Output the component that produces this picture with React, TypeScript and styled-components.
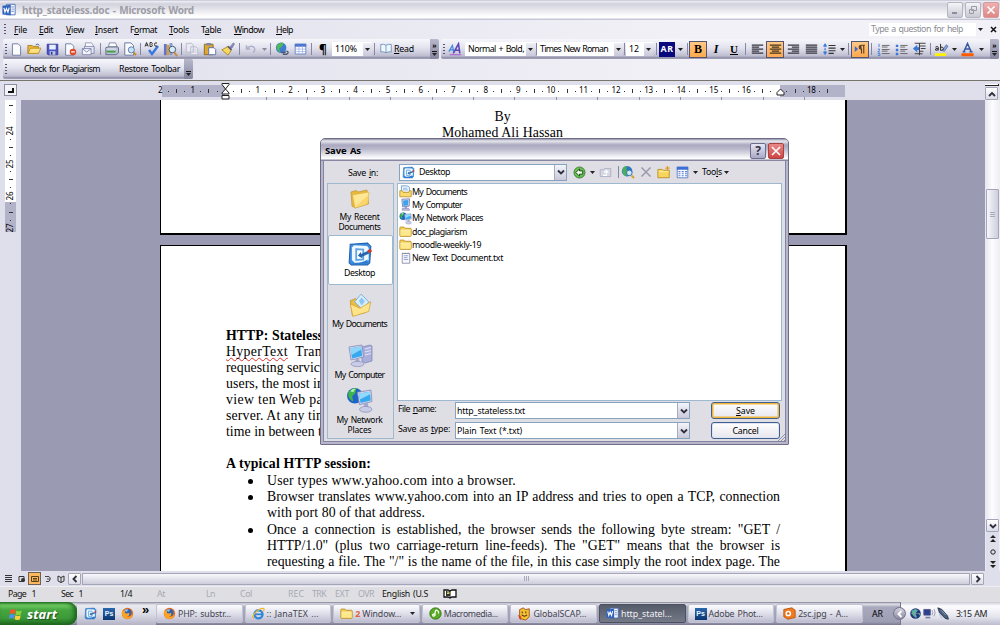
import React, { useLayoutEffect, useRef, useState } from 'react';
import styled, { createGlobalStyle, css } from 'styled-components';

const GlobalStyle = createGlobalStyle`
  * { box-sizing: border-box; }
  html, body { margin: 0; padding: 0; overflow: hidden; }
  body { font-family: 'Noto Sans', 'Open Sans', sans-serif; font-size: 9px; color: #000; }
  svg { display: block; flex: none; }
`;

/* ---------- text ---------- */

const TextBox = styled.span<{ $size?: number; $color?: string; $bold?: boolean; $serif?: boolean; $italic?: boolean }>`
  display: inline-block;
  white-space: pre;
  flex: none;
  font-size: ${p => p.$size ?? 8.8}px;
  color: ${p => p.$color ?? '#000'};
  font-weight: ${p => (p.$bold ? 700 : 400)};
  font-style: ${p => (p.$italic ? 'italic' : 'normal')};
  ${p => (p.$serif ? css`font-family: 'Liberation Serif', 'Times New Roman', serif;` : css`word-spacing: 1px;`)}
`;
const Mnemonic = styled.u`
  text-decoration: underline;
  text-decoration-thickness: 1px;
  text-underline-offset: 1px;
`;

type LabelProps = {
  t: string; w?: number; size?: number; color?: string; bold?: boolean; serif?: boolean; italic?: boolean;
};

/* Tracks the text so that it fills the given width; "&" marks the mnemonic. */
function Label({ t, w, size, color, bold, serif, italic }: LabelProps) {
  const ref = useRef<HTMLSpanElement>(null);
  const [tracking, setTracking] = useState(0);
  const at = t.indexOf('&');
  const count = t.length - (at >= 0 ? 1 : 0);
  useLayoutEffect(() => {
    if (ref.current && w) setTracking((w - ref.current.getBoundingClientRect().width) / count);
  }, [w, count]);
  return (
    <TextBox ref={ref} $size={size} $color={color} $bold={bold} $serif={serif} $italic={italic} style={{ letterSpacing: tracking }}>
      {at < 0 ? t : <>{t.slice(0, at)}<Mnemonic>{t[at + 1]}</Mnemonic>{t.slice(at + 2)}</>}
    </TextBox>
  );
}

/* ---------- icons ---------- */

const Svg = ({ s = 14, children, box = 16 }: { s?: number; children: React.ReactNode; box?: number }) => (
  <svg width={s} height={s} viewBox={`0 0 ${box} ${box}`} fill="none">{children}</svg>
);
const Page = ({ x = 3, y = 1, w = 10, h = 14 }) => (
  <path d={`M${x} ${y}h${w - 3}l3 3v${h - 3}h-${w}z`} fill="#fafcff" stroke="#5f6c92" />
);
const Folder = ({ s = 14 }) => (
  <Svg s={s}>
    <path d="M1 3.5q0-1 1-1h4l1.5 1.5H14q1 0 1 1V13q0 1-1 1H2q-1 0-1-1z" fill="#f3cd57" stroke="#b98d26" />
    <path d="M1.8 6.5h12.6v6.7H1.8z" fill="#fde88c" />
    <path d="M2 6.4h12" stroke="#fff6c8" />
  </Svg>
);
const FolderTall = ({ s = 24 }) => (
  <Svg s={s} box={24}>
    <path d="M3 6l5-1.500 2 1.500 9-2 1.500 14L7 22l-3-2z" fill="#e8b93c" stroke="#c0932c" strokeWidth=".7" />
    <path d="M4.500 9L21 6l-1.500 12L7 22z" fill="#fde795" stroke="#dcb13f" strokeWidth=".6" />
    <path d="M7 21L19.500 17.500 20.500 9z" fill="#f8cf58" opacity=".7" />
  </Svg>
);
const DesktopIcon = ({ s = 14 }) => (
  <Svg s={s} box={24}>
    <path d="M3 3l16-1 3 3-1 15-2 2H4l-2-2z" fill="#3d8ede" stroke="#1f63b4" />
    <path d="M4.500 6l2-2 12 .5 1.500 2v11L17 20H7l-2.500-2.500z" fill="#eef8fe" />
    <path d="M8.500 7.500l6.500.5v9l-6.500.5z" stroke="#5aa5e2" strokeWidth="1.600" fill="#fff" />
    <path d="M5 20q8 1 14-3v4H5z" fill="#2c7bd0" />
    <path d="M10 13.500L13 10v2l6.500-3 1 2.500-6.500 3v1.500z" fill="#2a66ae" />
    <path d="M19.500 10l3-1.500" stroke="#d33b27" strokeWidth="2.800" />
  </Svg>
);
const DocsIcon = ({ s = 24 }) => (
  <Svg s={s} box={24}>
    <path d="M3 8l5-2 2 2 7-1v12L5 22z" fill="#e9bd45" stroke="#bd922c" strokeWidth=".7" />
    <path d="M7 9l6-7 7 7-5 8z" fill="#d7edfb" stroke="#6ba9d8" strokeWidth=".8" />
    <path d="M11 8l2.500-3 3 3.500-3 4z" fill="#8ec6ee" />
    <path d="M3 11l9 4 10-6-2 9L5.500 22.500z" fill="#fde48a" stroke="#d1a437" strokeWidth=".7" />
  </Svg>
);
const DocsSmall = ({ s = 13 }) => (
  <Svg s={s}>
    <path d="M3 1h7l3 2v7H3z" fill="#eaf4fd" stroke="#6a97c8" />
    <path d="M5 4h5M5 6h6" stroke="#7fb1e0" />
    <path d="M1 7h3l1 2h7l1-2h2v7.500H1z" fill="#fbdc70" stroke="#b98d26" />
  </Svg>
);
const ComputerIcon = ({ s = 26 }) => (
  <Svg s={s} box={26}>
    <path d="M15 4l8-2 2 1v15l-7 2-3-2z" fill="#a9aedb" stroke="#7b80b4" strokeWidth=".7" />
    <path d="M18 6l6-1.500M18 9l6-1.500M18 12l6-1.500" stroke="#e6e8fa" />
    <path d="M2 4l13-2 1.500 12L4 17z" fill="#d5d9ee" stroke="#8388b5" strokeWidth=".8" />
    <path d="M3.500 5.200L14 3.500l1.200 9.500-10.200 2.400z" fill="#36a8ee" />
    <path d="M3.500 5.200L14 3.500l.4 3L4.500 12z" fill="#8cd5fb" />
    <path d="M8 16.500l4-.8.8 4H9z" fill="#a3a8d0" />
    <ellipse cx="10.500" cy="21" rx="6.500" ry="2.600" fill="#c9cce6" stroke="#8a8fb9" strokeWidth=".7" />
  </Svg>
);
const ComputerSmall = ({ s = 13 }) => (
  <Svg s={s}>
    <path d="M3.500 1.500L13 1l-.5 9-8 1z" fill="#d5d9ee" stroke="#7178ad" />
    <path d="M5 3l6.500-.5-.5 6.500-5.500.7z" fill="#37a4ec" />
    <path d="M7 11h3v2H7z" fill="#9aa0cb" />
    <path d="M4 13h8l1 2H4z" fill="#c9cce6" stroke="#7b81b2" strokeWidth=".8" />
  </Svg>
);
const NetworkIcon = ({ s = 26 }) => (
  <Svg s={s} box={26}>
    <circle cx="8.500" cy="8.500" r="7.500" fill="#1f62c9" />
    <path d="M2 6q3-5 8-5l-1 5-3 3 1 5q-5-2-5-8z" fill="#3fb548" />
    <path d="M4 4q3-3 5-2l-2 3z" fill="#b3efa6" />
    <path d="M11 5l13-2 1 11-12 3z" fill="#d5d9ee" stroke="#8388b5" strokeWidth=".8" />
    <path d="M12.400 6.200L23 4.500l.8 8.500-9.800 2.400z" fill="#36a8ee" />
    <path d="M12.400 6.200L23 4.500l.3 2.500L13.300 12z" fill="#93d9fb" />
    <path d="M17 16l4-.8.500 4.500h-4z" fill="#a3a8d0" />
    <ellipse cx="19" cy="21.500" rx="6" ry="2.800" fill="#c9cce6" stroke="#8a8fb9" strokeWidth=".7" />
  </Svg>
);
const Firefox = ({ s = 13 }) => (
  <Svg s={s}>
    <circle cx="8" cy="8" r="7" fill="#e56b14" />
    <circle cx="8.500" cy="7" r="4.400" fill="#2d63b2" />
    <path d="M1.500 4Q3 5 5 4.500 4 7 6 8q3 0 4-1 1 4-3 5 5 1 7-4 0 5-4 6.500Q4 15.500 2 11 0 7 1.500 4z" fill="#f9a427" />
    <path d="M4 4q2-2 5-1L7 6z" fill="#8fc3ef" />
  </Svg>
);
const IELogo = ({ s = 13 }) => (
  <Svg s={s}>
    <circle cx="8" cy="9" r="5" stroke="#2f86d6" strokeWidth="2.800" />
    <path d="M4 9h8.500" stroke="#2f86d6" strokeWidth="2.200" />
    <path d="M2 14Q-1 12 5 6q6-5.500 9.500-4 1 1-.5 3.500" stroke="#f2b829" strokeWidth="1.500" />
  </Svg>
);
const TileBox = styled.span<{ $bg: string; $s: number }>`
  width: ${p => p.$s}px;
  height: ${p => p.$s}px;
  background: ${p => p.$bg};
  display: flex;
  align-items: center;
  justify-content: center;
  flex: none;
  font: 700 7px 'Liberation Sans', sans-serif;
  color: #eaf5ff;
`;
const PsIcon = () => <TileBox $bg="linear-gradient(#2a67ad,#0c3572)" $s={12}>Ps</TileBox>;
const WordLogo = ({ s = 14 }) => (
  <Svg s={s}>
    <path d="M5 1.500h10v12H5z" fill="#f4f8ff" stroke="#4a6db8" />
    <path d="M10.500 4.500h3M11 7h2.500M10.500 9.500h3" stroke="#6a88c6" />
    <path d="M.5 3l9.500-1v12l-9.500-1z" fill="#2d62bd" />
    <path d="M2.200 5.500l1.200 5 1.700-4.300 1.700 4.300L8.200 5.200" stroke="#fff" strokeWidth="1.300" />
  </Svg>
);

const Tool: Record<string, React.ReactNode> = {
  new: <Svg s={13}><Page /></Svg>,
  open: <Svg><path d="M1 4h5l1 1h6v8H1z" fill="#eebb3c" stroke="#aa7c1c" /><path d="M1 13l3-6h12l-3 6z" fill="#fde081" stroke="#b68b25" /><path d="M10 3q3-2 4 1" stroke="#3c5fae" /></Svg>,
  save: <Svg s={13}><path d="M1.500 1.500h13v13h-12l-1-1z" fill="#4a55c4" stroke="#2a3390" /><path d="M4 2h8v6H4z" fill="#e9eefc" /><path d="M4.500 10h7v4.500h-7z" fill="#c5cbe6" /><path d="M6 11h2v3H6z" fill="#2a3390" /></Svg>,
  perm: <Svg s={13}><Page x={2} /><circle cx="11" cy="11" r="4" fill="#e2492b" /><path d="M8.800 11h4.400" stroke="#fff" strokeWidth="1.600" /></Svg>,
  mail: <Svg><path d="M5 1h7l2 3v5H5z" fill="#fff" stroke="#9097b5" /><path d="M4 5h11v8H4z" fill="#e3e6f4" stroke="#7d86ab" /><path d="M1.500 7.500h10v7h-10z" fill="#f3f4fc" stroke="#7d86ab" /><path d="M1.500 7.500l5 4 5-4" stroke="#7d86ab" /></Svg>,
  print: <Svg><path d="M5 1h7l2 5H4z" fill="#fff" stroke="#7a83a2" /><path d="M1 6.500l3-1h10l1.500 1v6l-3 2H1z" fill="#b9c0d3" stroke="#59627f" /><path d="M2 11h10" stroke="#3da23f" strokeWidth="2" /><path d="M1.500 8h11" stroke="#eef1f8" /></Svg>,
  preview: <Svg><Page x={2} /><circle cx="9.500" cy="9" r="3.500" fill="#c6e3fa" stroke="#52739d" /><path d="M12 12l3 3" stroke="#c98a35" strokeWidth="2.200" /></Svg>,
  spell: <Svg s={16}><path d="M5 9l3 4 6-8" stroke="#3579df" strokeWidth="2.400" /><path d="M1 5.500l1.600-4 1.600 4M1.600 4.200h2M6 1.500v4h1.800q1-.8 0-2 1-1.400-.2-2zM13 2q-2.500-1-2.500 1.500T13 5" stroke="#222" strokeWidth=".9" /></Svg>,
  research: <Svg s={15}><path d="M1 2h3v12H1z" fill="#6474c8" /><path d="M4 3h3v11H4z" fill="#d0a046" /><path d="M7 1h3v13H7z" fill="#8d9ad8" /><circle cx="10" cy="8" r="3.500" fill="#d6ecfb" stroke="#456" /><path d="M12 11l3 4" stroke="#c98a35" strokeWidth="2" /></Svg>,
  copy: <Svg><path d="M1.500 1.500h6l2 2v8h-8zM6.500 5.500h6l2 2v7h-8z" fill="#e9eaf3" stroke="#b7b9cb" /><path d="M8 9h5M8 11.500h5" stroke="#c5c7d6" /></Svg>,
  paste: <Svg><path d="M1.500 2.500h10v12h-10z" fill="#dda736" stroke="#8c6519" /><path d="M4 1h5v3H4z" fill="#7b86a5" /><path d="M6.500 6.500h6l2 2v6h-8z" fill="#fff" stroke="#4f69a8" /></Svg>,
  painter: <Svg><path d="M10 6l4-5 1.500 1-3 5z" fill="#8b90b6" stroke="#5d6286" strokeWidth=".6" /><path d="M1 9l7-4 4 4-4 6z" fill="#f7d962" stroke="#a78422" /><path d="M8 5l4 4" stroke="#5d5a7b" strokeWidth="2" /></Svg>,
  undo: <Svg s={12}><path d="M2 3v5h5M2.500 8Q6 3 11 5q4 3 0 8" stroke="#aeb0c8" strokeWidth="2" /></Svg>,
  link: <Svg><circle cx="7" cy="6.500" r="6" fill="#3d7ccf" /><path d="M2 4q4-5 8-3L8 5 5 7l1 5Q1 9 2 4z" fill="#52b954" /><path d="M7 12h3q2 0 2-1.500M9 14h4q2-.5 2-2t-2-1.500" stroke="#4b5673" strokeWidth="1.500" /></Svg>,
  table: <Svg s={13}><path d="M1.500 1.500h13v12h-13z" fill="#fff" stroke="#5474c2" /><path d="M1 1h14v3.500H1z" fill="#4e78d0" /><path d="M6 4v9M10.500 4v9M2 7.500h12M2 10.500h12" stroke="#a5b9e6" /></Svg>,
  views: <Svg s={13}><path d="M1.500 1.500h13v13h-13z" fill="#fff" stroke="#4a70c6" /><path d="M1 1h14v3.500H1z" fill="#3d6fd6" /><path d="M3 7h2.500M7 7h2.500M11 7h2.500M3 9.500h2.500M7 9.500h2.500M11 9.500h2.500M3 12h2.500M7 12h2.500M11 12h2.500" stroke="#5a80d2" strokeWidth="1.400" /></Svg>,
  book: <Svg s={12}><path d="M8 3Q5 1 1 2v10q4-1 7 1 3-2 7-1V2q-4-1-7 1z" fill="#eef7ff" stroke="#5a83ad" /><path d="M8 3v10" stroke="#5a83ad" /></Svg>,
  styles: <Svg><path d="M1 11L5 4l1.500 7M2.500 9H6" stroke="#4a8ad8" strokeWidth="1.500" /><path d="M6 13l6-11 1.500 11M8 9.500h5" stroke="#5c48b4" strokeWidth="1.800" /><path d="M2 14.500h13" stroke="#a55ad0" strokeWidth="1.200" /></Svg>,
  left: <Svg s={13}><path d="M1 2.500h14M1 5h9M1 7.500h14M1 10h9M1 12.500h14" stroke="#35353f" strokeWidth="1.500" /></Svg>,
  center: <Svg s={13}><path d="M1 2.500h14M3.500 5h9M1 7.500h14M3.500 10h9M1 12.500h14" stroke="#44351f" strokeWidth="1.500" /></Svg>,
  right: <Svg s={13}><path d="M1 2.500h14M6 5h9M1 7.500h14M6 10h9M1 12.500h14" stroke="#35353f" strokeWidth="1.500" /></Svg>,
  justify: <Svg s={13}><path d="M1 2.500h14M1 5h14M1 7.500h14M1 10h14M1 12.500h14" stroke="#35353f" strokeWidth="1.500" /></Svg>,
  spacing: <Svg><path d="M3.500 1L1 5h5zM3.500 15L1 11h5z" fill="#3c7be0" /><path d="M3.500 4v8" stroke="#3c7be0" strokeWidth="1.500" strokeDasharray="2 1" /><path d="M7.500 4h8M7.500 7h8M7.500 10h8M7.500 13h6" stroke="#333" strokeWidth="1.300" /></Svg>,
  ltr: <Svg s={12}><path d="M1 4l4.500 4L1 12z" fill="#416bd0" /><path d="M14.500 3H10q-3 0-3 2.500T10 8v6M13 3v11" stroke="#5b3d28" strokeWidth="1.500" /><path d="M8 4h2v3.500H8z" fill="#5b3d28" /></Svg>,
  numbers: <Svg s={13}><path d="M2.500 1v4M1 7.500h2v1.500l-2 2h2.500M1 13h2.500v2.500H1" stroke="#3e75d8" strokeWidth="1.100" /><path d="M6 3h9.500M6 5h7M6 8h9.500M6 10h7M6 13h9.500" stroke="#555" /></Svg>,
  bullets: <Svg s={13}><path d="M1 2h3v3H1zM1 7h3v3H1zM1 12h3v3H1z" fill="#3e75d8" /><path d="M6.500 3h9M6.500 5h6M6.500 8h9M6.500 10h6M6.500 13h9" stroke="#555" /></Svg>,
  indent: <Svg s={14}><path d="M6 3L1 7.500 6 12V9h3V6H6z" fill="#3e75d8" /><path d="M3 1.500h12.500M9 4.500h6.500M10 7.500h5.500M9 10.500h4M3 13.500h9M8.500 1v14" stroke="#444" strokeWidth="1.200" /></Svg>,
  mark: <Svg s={15}><path d="M1 12h12v3H1z" fill="#fff200" /><path d="M9 9l4-6 2 1.500L11 10z" fill="#8fa6da" stroke="#455b93" strokeWidth=".7" /><path d="M1.500 5.500q2.500-1.500 3 0V9M4.500 7Q1 6.500 1.500 8.500 3 9.500 4.500 8M7 2v7q3 0 3-2T7 5.500" stroke="#222" strokeWidth="1" /></Svg>,
  color: <Svg s={15}><path d="M1.500 12h13v3.200h-13z" fill="#ff5a00" /><path d="M4 10.500L8 1.500l4 9M5.500 7.500h5M2.800 10.500h3M10 10.500h3.500" stroke="#35589f" strokeWidth="1.500" /></Svg>,
  back: <Svg s={13}><circle cx="8" cy="8" r="6.800" fill="#6cbf58" stroke="#2f7423" /><path d="M8 3.500L3.500 8 8 12.500V10h4V6H8z" fill="#f4fff0" stroke="#1d4c15" strokeWidth="1.200" /></Svg>,
  up: <Svg s={13}><path d="M1.500 4.500h4l1-1.500h8v10h-13z" fill="#d5d6e2" stroke="#a9abc2" /><path d="M5 11.500h4V6M6.500 8L9 5.500 11.500 8" stroke="#fff" strokeWidth="1.400" /></Svg>,
  search: <Svg s={14}><circle cx="7" cy="7" r="6" fill="#2d78c6" /><path d="M1.500 6Q2 1 7 1l-1 4 3 3-3 5Q1 11 1.500 6z" fill="#4cae58" /><circle cx="9.500" cy="9" r="3.200" fill="#c7e9fa" stroke="#31649b" /><path d="M12 12l3 3" stroke="#d4a02f" strokeWidth="2.200" /></Svg>,
  del: <Svg s={12}><path d="M2 2l12 12M14 2L2 14" stroke="#9a9aab" strokeWidth="2" /></Svg>,
  newfolder: <Svg s={14}><path d="M1 5h5l1 1h7v8.500H1z" fill="#f7d55c" stroke="#b98d26" /><path d="M2 7.500h11" stroke="#fff1a8" /><path d="M12 1v5M9.500 3.500h5" stroke="#e39a21" strokeWidth="1.500" /></Svg>,
};

const Caret = ({ c = '#222' }: { c?: string }) => (
  <svg width="5" height="3" viewBox="0 0 5 3"><path d="M0 0h5L2.500 3z" fill={c} /></svg>
);
const Chevron = ({ d = 'down', c = '#303040' }: { d?: 'up' | 'down' | 'left' | 'right'; c?: string }) => {
  const paths = { up: 'M1 6l3-3 3 3', down: 'M1 2.500l3 3 3-3', left: 'M5.500 1l-3 3 3 3', right: 'M2.500 1l3 3-3 3' };
  return <svg width="8" height="8" viewBox="0 0 8 8" fill="none"><path d={paths[d]} stroke={c} strokeWidth="1.900" /></svg>;
};

/* ---------- word window ---------- */

const Screen = styled.div`
  position: relative;
  width: 1000px;
  height: 625px;
  overflow: hidden;
  display: flex;
  flex-direction: column;
  background: #dfdeeb;
`;
const TitleBar = styled.header`
  height: 20px;
  display: flex;
  align-items: center;
  padding: 0 1px 0 2px;
  gap: 6px;
  background: linear-gradient(#aeaec2 0, #efeff6 1px, #d2d2dd 4px, #e3e3ea 9px, #fdfdfd 16px, #fff 18px, #c6c6d6 19px);
`;
const Grow = styled.div`flex: 1;`;
const WinButtons = styled.div`display: flex; gap: 2px;`;
const WinButton = styled.div<{ $close?: boolean }>`
  width: 16px;
  height: 16px;
  border: 1px solid ${p => (p.$close ? '#d59ba0' : '#b5b5c3')};
  border-radius: 2px;
  background: ${p => (p.$close ? 'linear-gradient(#efb0ae,#dd8886)' : 'linear-gradient(#f4f4f8,#c9c9d4)')};
  display: flex;
  align-items: center;
  justify-content: center;
`;
const MenuBar = styled.nav`
  height: 19px;
  display: flex;
  align-items: center;
  padding-bottom: 1px;
  background: linear-gradient(90deg, #dfdfec, #f2f1f7 70%);
`;
const Grip = styled.i`
  width: 2px;
  height: 11px;
  flex: none;
  background: repeating-linear-gradient(#55556d 0 1.500px, transparent 1.500px 3px);
`;
const MenuItem = styled.div<{ $w: number }>`width: ${p => p.$w}px; flex: none;`;
const HelpBox = styled.div`
  width: 107px;
  height: 13px;
  background: #fff;
  display: flex;
  align-items: center;
  padding-left: 2px;
`;
const MenuTail = styled.div`
  width: 24px;
  display: flex;
  align-items: center;
  justify-content: space-between;
  padding: 0 3px 0 2px;
`;
const ToolRow = styled.div`
  height: 20px;
  display: flex;
  gap: 2px;
  padding-left: 3px;
  background: linear-gradient(90deg, #dfdfec, #f2f1f7 70%);
`;
const Bar = styled.div<{ $w: number }>`
  width: ${p => p.$w}px;
  height: 20px;
  flex: none;
  display: flex;
  align-items: center;
  padding-left: 2px;
  overflow: hidden;
  border-radius: 2px;
  background: linear-gradient(#f6f6fb, #e2e2ee 45%, #bdbdd0 85%, #84849f 96%, #c4c4d4);
`;
const Slot = styled.div<{ $w: number; $end?: boolean }>`
  width: ${p => p.$w}px;
  height: 17px;
  flex: none;
  display: flex;
  align-items: center;
  justify-content: ${p => (p.$end ? 'flex-start' : 'center')};
`;
const ActiveSlot = styled(Slot)`
  background: linear-gradient(#ffc985, #fba94d);
  border: 1px solid #54546e;
`;
const Sep = styled.i<{ $w?: number }>`
  width: ${p => p.$w ?? 5}px;
  height: 12px;
  flex: none;
  background: linear-gradient(#8787a5, #8787a5) center / 1px 100% no-repeat;
`;
const Combo = styled.div<{ $w: number }>`
  width: ${p => p.$w}px;
  height: 14px;
  flex: none;
  background: #fff;
  display: flex;
  align-items: center;
  justify-content: space-between;
  padding-left: 3px;
`;
const ComboArrow = styled.span`
  width: 9px;
  height: 13px;
  background: linear-gradient(#eeeef6, #c9c9da);
  display: flex;
  align-items: center;
  justify-content: center;
`;
const Overflow = styled.div`
  width: 9px;
  height: 20px;
  flex: none;
  margin-left: auto;
  padding-bottom: 3px;
  display: flex;
  flex-direction: column;
  justify-content: flex-end;
  align-items: center;
  gap: 1px;
  background: linear-gradient(#b8b8cc, #85859f);
`;
const Dash = styled.i`width: 5px; height: 1px; background: #111;`;
const LangBox = styled.div`
  width: 16px;
  height: 15px;
  flex: none;
  background: #09097e;
  display: flex;
  align-items: center;
  justify-content: center;
`;
const CustomRow = styled(ToolRow)`height: 21px;`;

/* ---------- ruler ---------- */

const RulerRow = styled.div`
  height: 20px;
  flex: none;
  border-top: 1px solid #77756c;
  display: flex;
  background: #dfdeeb;
`;
const RulerCorner = styled.div`
  width: 156px;
  padding: 3px 0 0 4px;
`;
const TabBox = styled.div`
  width: 13px;
  height: 12px;
  border: 1px solid #8e8ea2;
  background: #f3f3f8;
  display: flex;
  align-items: center;
  justify-content: center;
`;
const TabMark = styled.i`width: 6px; height: 5px; border: solid #111; border-width: 0 2px 2px 0;`;
const RulerScale = styled.div`width: 829px; padding-top: 4px;`;
const Scale = styled.div`
  width: 689px;
  height: 12px;
  display: flex;
  align-items: center;
  overflow: hidden;
  background: linear-gradient(90deg, transparent 6px, #b2b2c8 6px 69.500px, #fff 69.500px 624px, #b2b2c8 624px);
`;
const Mark = styled.span`
  width: 8.155px;
  height: 12px;
  flex: none;
  display: flex;
  justify-content: center;
  font-size: 8px;
  line-height: 10px;
  letter-spacing: -0.2px;
  white-space: nowrap;
`;
const Tick = styled.i<{ $h: number }>`width: 1px; height: ${p => p.$h}px; background: #333; margin: auto 0;`;
const TabStops = styled.div`
  height: 3px;
  width: 540px;
  margin-left: 110px;
  background: repeating-linear-gradient(90deg, #8f8fa6 0 1px, transparent 1px 41.400px);
`;
const IndentMark = styled.div<{ $x: number; $y: number }>`
  position: absolute;
  left: ${p => p.$x}px;
  top: ${p => p.$y}px;
`;
const SplitHandle = styled.div`
  width: 14px;
  padding-top: 3px;
  display: flex;
  flex-direction: column;
  gap: 1px;
`;
const SplitLine = styled.i`height: 2px; background: #fff; border-bottom: 1px solid #222; border-right: 1px solid #222;`;

/* ---------- document area ---------- */

const Work = styled.div`height: 471px; display: flex; flex: none;`;
const VRulerCol = styled.div`width: 21px; padding-left: 5px; background: #dfdeeb;`;
const VRuler = styled.div`
  width: 11px;
  height: 132px;
  overflow: hidden;
  padding-top: 3px;
  background: linear-gradient(#fff 102px, #b2b2c8 102px);
`;
const VMark = styled.span<{ $h?: number }>`
  height: ${p => p.$h ?? 8.1}px;
  display: flex;
  align-items: center;
  justify-content: center;
  font-size: 8px;
  line-height: 8px;
`;
const Turned = styled.span`transform: rotate(-90deg); letter-spacing: -0.2px;`;
const HTick = styled.i<{ $w: number }>`height: 1px; width: ${p => p.$w}px; background: #333;`;
const Desk = styled.main`
  width: 964px;
  height: 471px;
  padding-left: 139px;
  overflow: hidden;
  background: #9b9ab3;
`;
const Sheet = styled.article<{ $h: number; $first?: boolean }>`
  width: 687px;
  height: ${p => p.$h}px;
  background: #fff;
  border: solid #000;
  border-width: ${p => (p.$first ? '0 2px 2px 1px' : '1px 2px 0 1px')};
  margin-bottom: 10px;
  padding: ${p => (p.$first ? '9px 66px 0 65px' : '82px 65px 0 65px')};
  ${p => p.$first && css`text-align: center;`}
`;
const Line = styled.div<{ $justify?: boolean }>`
  height: 16px;
  line-height: 16px;
  white-space: nowrap;
  font-family: 'Liberation Serif', 'Times New Roman', serif;
  font-size: 13.800px;
  ${p => p.$justify && css`text-align: justify; text-align-last: justify; white-space: normal;`}
`;
const CenterLine = styled(Line)`height: 15.500px; line-height: 15.500px;`;
const Misspelt = styled.span`
  display: inline-block;
  height: 16px;
  vertical-align: top;
  letter-spacing: 0.35px;
  text-decoration: underline wavy #e02f2f 1px;
  text-underline-offset: 1px;
  text-decoration-skip-ink: none;
`;
const Bullets = styled.ul`list-style: none; margin: 0; padding: 0;`;
const Bullet = styled.li`display: flex; padding-top: 0.700px;`;
const Dot = styled.i`
  width: 5px;
  height: 5px;
  border-radius: 50%;
  background: #000;
  margin: 6px 14px 0 22px;
  flex: none;
`;
const BulletText = styled.div`flex: 1;`;

const ScrollCol = styled.div`
  width: 15px;
  height: 471px;
  display: flex;
  flex-direction: column;
  padding-left: 1px;
  padding-right: 1px;
  background: linear-gradient(90deg, #e6e6f0, #fdfdff 50%, #ececf4);
`;
const ScrollButton = styled.div<{ $w?: number; $h?: number }>`
  width: ${p => p.$w ?? 13}px;
  height: ${p => p.$h ?? 13}px;
  flex: none;
  border: 1px solid #a5a5b8;
  border-radius: 1px;
  background: linear-gradient(#fff, #dcdce8);
  display: flex;
  align-items: center;
  justify-content: center;
`;
const Thumb = styled(ScrollButton)`
  margin: 89px 0 280px;
  background: linear-gradient(90deg, #f6f6fb, #cfcfdd);
`;
const GripLines = styled.i<{ $v?: boolean }>`
  width: 5px;
  height: 5px;
  background: repeating-linear-gradient(${p => (p.$v ? '90deg' : '0deg')}, #a9a9ba 0 1px, transparent 1px 2px);
`;
const Pager = styled.div`
  height: 13px;
  display: flex;
  align-items: center;
  justify-content: center;
  background: #dfdeeb;
`;
const ViewBar = styled.div`
  height: 15px;
  flex: none;
  display: flex;
  align-items: center;
  padding-left: 2px;
  background: #dfdeeb;
`;
const ViewButton = styled.div<{ $on?: boolean }>`
  width: 13px;
  height: 13px;
  display: flex;
  align-items: center;
  justify-content: center;
  ${p => p.$on && css`background: #fdb85f; border: 1px solid #6f6154;`}
`;
const HThumb = styled.div`
  width: 888px;
  height: 12px;
  margin: 0 1px;
  border: 1px solid #a5a5b8;
  background: linear-gradient(#f8f8fc, #cdcddc);
  display: flex;
  align-items: center;
  justify-content: center;
`;
const StatusBar = styled.footer`
  height: 16px;
  flex: none;
  display: flex;
  align-items: center;
  padding-left: 8px;
  background: linear-gradient(#eeeef3 1px, #dfdfe3 1px);
`;
const StatusCell = styled.div<{ $w: number }>`width: ${p => p.$w}px; flex: none; display: flex;`;

/* ---------- taskbar ---------- */

const TaskBar = styled.div`
  height: 23px;
  flex: none;
  display: flex;
  align-items: stretch;
  background: linear-gradient(#7d7d94, #e2e2eb 2px, #a9a9be 5px, #9c9cb3 20px, #77778f);
`;
const StartButton = styled.div`
  width: 77px;
  flex: none;
  display: flex;
  align-items: center;
  gap: 4px;
  padding-left: 9px;
  border-radius: 0 9px 9px 0;
  background: linear-gradient(#2c7c2b, #6fcd62 3px, #45a53f 8px, #3c9a38 16px, #1f6b20);
  box-shadow: inset -3px 0 4px #1e621f;
`;
const StartText = styled.span`
  color: #fff;
  text-shadow: 1px 1px 1px #1b4f1b;
`;
const Quick = styled.div`
  width: 79px;
  display: flex;
  align-items: center;
  gap: 6px;
  padding-left: 7px;
  flex: none;
  background: linear-gradient(#8d8da2, #e9e9f0 3px, #dcdce6 12px, #b3b3c6);
`;
const More = styled.span`font: 700 13px 'Liberation Sans', sans-serif; margin: -8px 0 0 2px;`;
const Tasks = styled.div`display: flex; gap: 2px; width: 708px; padding-top: 2px; flex: none;`;
const Task = styled.div<{ $on?: boolean }>`
  width: 86.600px;
  height: 19px;
  display: flex;
  align-items: center;
  padding: 0 4px 0 6px;
  gap: 2px;
  border-radius: 2px;
  border: 1px solid ${p => (p.$on ? '#4d515f' : '#c3c3d2')};
  background: ${p => (p.$on ? 'linear-gradient(#565b6a,#747988)' : 'linear-gradient(#fcfcff,#dcdce8 55%,#bcbcd0)')};
`;
const Lang = styled.div`width: 36px; flex: none; display: flex; align-items: center; justify-content: center; padding-right: 9px;`;
const Tray = styled.div`
  flex: 1;
  display: flex;
  align-items: center;
  gap: 1px;
  border-left: 1px solid #777790;
  background: linear-gradient(#c9c9d6, #fdfdff 4px, #e4e4ee 15px, #bcbccd);
`;
const Hide = styled.span`
  width: 13px;
  height: 13px;
  margin-left: -8px;
  border-radius: 50%;
  border: 1px solid #72728a;
  background: linear-gradient(#d0d0de, #8a8aa0);
  display: flex;
  align-items: center;
  justify-content: center;
  flex: none;
`;

/* ---------- dialog ---------- */

const Dialog = styled.section`
  position: absolute;
  left: 320px;
  top: 138px;
  width: 469px;
  height: 307px;
  border: 1px solid #6e6d88;
  border-radius: 5px 5px 1px 1px;
  background: #dfdee4;
  box-shadow: inset 0 0 0 2px #b7b6ca, inset 0 0 0 3px #8584a0;
  overflow: hidden;
`;
const DialogTitle = styled.div`
  height: 22px;
  display: flex;
  align-items: center;
  gap: 2px;
  padding: 1px 4px 0 4px;
  background: linear-gradient(#8f8ea6, #e8e8ef 2px, #a9a8bf 6px, #b9b8cb 10px, #f4f4f8 18px, #fff 20px, #8887a2 21px);
`;
const DialogButton = styled.div<{ $close?: boolean }>`
  width: 16px;
  height: 16px;
  border-radius: 2px;
  border: 1px solid ${p => (p.$close ? '#a8413f' : '#6e6d90')};
  background: ${p => (p.$close ? 'linear-gradient(#e98a88,#cc4644)' : 'linear-gradient(#e6e6f2,#a9a8c6)')};
  display: flex;
  align-items: center;
  justify-content: center;
`;
const LookRow = styled.div`height: 22px; display: flex; align-items: center; padding: 0 0 0 27px;`;
const LookLabel = styled.div`width: 51px; flex: none;`;
const Field = styled.div<{ $w: number; $h?: number }>`
  width: ${p => p.$w}px;
  height: ${p => p.$h ?? 17}px;
  flex: none;
  border: 1px solid #85a3bf;
  background: #fff;
  display: flex;
  align-items: center;
  gap: 4px;
  padding-left: 2px;
`;
const FormField = styled(Field)`padding-left: 1px;`;
const DropButton = styled.span`
  width: 12px;
  align-self: stretch;
  margin-left: auto;
  border-left: 1px solid #a3adc2;
  background: linear-gradient(#f4f4fa, #c9c9da);
  display: flex;
  align-items: center;
  justify-content: center;
`;
const DialogBody = styled.div`display: flex; padding-left: 6px; gap: 3px;`;
const Places = styled.div`
  width: 67px;
  height: 256px;
  border: 1px solid #9db9cf;
  display: flex;
  flex-direction: column;
`;
const Place = styled.div<{ $h: number; $on?: boolean; $pad?: number }>`
  height: ${p => p.$h}px;
  padding-top: ${p => p.$pad ?? 4}px;
  padding-right: 2px;
  display: flex;
  flex-direction: column;
  align-items: center;
  ${p => p.$on && css`background: #fff; border: 1px solid #9db9cf; border-radius: 2px;`}
`;
const PlaceName = styled.div`height: 10px; line-height: 10px;`;
const IconGap = styled.div<{ $h: number }>`height: ${p => p.$h}px; flex: none;`;
const Main = styled.div`width: 385px;`;
const FileList = styled.div`
  height: 218px;
  border: 1px solid #9db9cf;
  background: #fff;
  padding: 1px 0 0 1px;
`;
const FileRow = styled.div`height: 13.300px; display: flex; align-items: center;`;
const FileIcon = styled.span`width: 13px; display: flex; justify-content: center; flex: none;`;
const Form = styled.div`display: grid; grid-template-columns: 58px 235px 1fr; row-gap: 3px; padding-top: 1px; align-items: center;`;
const FormLabel = styled.div`padding-left: 1px; margin-top: -4px;`;
const Push = styled.div<{ $main?: boolean }>`
  width: 69px;
  height: 17px;
  justify-self: end;
  margin-right: 2px;
  border: 1px solid #3f5f8f;
  border-radius: 3px;
  background: linear-gradient(#fff, #e6e6ee);
  box-shadow: inset 0 0 0 ${p => (p.$main ? '1.500px #f0b63c' : '1px #dfe3f2')};
  display: flex;
  align-items: center;
  justify-content: center;
`;
const Resize = styled.div`position: absolute; right: 3px; bottom: 3px;`;

const Slots = ({ names, w = 18 }: { names: string[]; w?: number }) => (
  <>{names.map(n => <Slot key={n} $w={w}>{Tool[n]}</Slot>)}</>
);
const Drop = ({ w = 8 }: { w?: number }) => <Slot $w={w}><Caret /></Slot>;

const rulerMarks = Array.from({ length: 83 }, (_, i) => {
  const q = i - 8;
  const n = Math.abs(q / 4);
  if (q % 4 === 0) return q === 0 || n === 17 ? '' : String(n);
  return q % 2 === 0 ? '|' : '.';
});

const files: [string, number, React.ReactNode][] = [
  ['My Documents', 55, <DocsSmall s={13} />],
  ['My Computer', 50, <ComputerSmall s={13} />],
  ['My Network Places', 71, <NetworkIcon s={13} />],
  ['doc_plagiarism', 55, <Folder s={13} />],
  ['moodle-weekly-19', 69, <Folder s={13} />],
  ['New Text Document.txt', 91, <Svg s={12}><path d="M3 2h10v13H3z" fill="#f8f8fc" stroke="#77799a" /><path d="M5 5h6M5 7.500h5M5 10h6" stroke="#6f8cc0" /><path d="M3 1.500h10" stroke="#777" strokeDasharray="1 1" /></Svg>],
];

const tasks: [string, number, React.ReactNode, boolean?][] = [
  ['PHP: substr...', 53, <Firefox />],
  [':: JanaTEX ...', 52, <IELogo />],
  ['Window...', 39, <Folder s={13} />],
  ['Macromedia...', 54, <Svg s={13}><circle cx="8" cy="8" r="7" fill="#58ab23" stroke="#2e6d12" /><path d="M9.500 3.500Q7 4 7.500 10.500M7.500 9q-3-1-3 1t3 .5M9.500 4q3 1 2 4" stroke="#fff" strokeWidth="1.500" /></Svg>],
  ['GlobalSCAP...', 53, <Svg s={14}><path d="M3 3l4-2 3 2 4-1v9l-4 4-7-2z" fill="#f3c22f" stroke="#a04c18" /><path d="M1 9l4 2-1 4z" fill="#d83b20" /><path d="M6 5v2M10 5v2M5.500 9q3 3 6 0" stroke="#5c2a10" strokeWidth="1.200" /></Svg>],
  ['http_statel...', 51, <WordLogo s={13} />, true],
  ['Adobe Phot...', 54, <PsIcon />],
  ['2sc.jpg - A...', 50, <Svg s={13}><path d="M1 3l10-2 4 3v9l-9 2-5-3z" fill="#ef7b1c" stroke="#b4500d" /><circle cx="6.500" cy="8" r="3.500" fill="#fff" /><circle cx="6.500" cy="8" r="1.500" fill="#d9611a" /></Svg>],
];

const status: [string, number, number, boolean][] = [
  ['Page  1', 53, 28, true], ['Sec  1', 59, 22, true], ['1/4', 37, 12, true], ['At', 49, 8, false], ['Ln', 34, 9, false],
  ['Col', 48, 12, false], ['REC', 24, 16, false], ['TRK', 23, 14, false], ['EXT', 23, 14, false], ['OVR', 24, 16, false],
  ['English (U.S', 61, 46, true],
];

const menus: [string, number, number][] = [
  ['&File', 25, 13], ['&Edit', 27, 14], ['&View', 29, 18], ['&Insert', 35, 23], ['F&ormat', 39, 27],
  ['&Tools', 32, 20], ['T&able', 33, 20], ['&Window', 42, 30], ['&Help', 30, 17],
];

const DocText = ({ t, w, bold }: { t: string; w: number; bold?: boolean }) => <Label t={t} w={w} size={13.8} serif bold={bold} />;

export default function App() {
  return (
    <>
      <GlobalStyle />
      <Screen>
        <TitleBar>
          <WordLogo s={14} />
          <Label t="http_stateless.doc - Microsoft Word" w={172} size={10} bold color="#9d9da6" />
          <Grow />
          <WinButtons>
            <WinButton><svg width="10" height="10"><path d="M2 8h5" stroke="#8d8d9c" strokeWidth="2" /></svg></WinButton>
            <WinButton><svg width="10" height="10" fill="none"><path d="M3.500 1.500h5v4h-5zM1.500 4.500h4v4h-4z" stroke="#9a9aa8" /></svg></WinButton>
            <WinButton $close><svg width="10" height="10"><path d="M1.500 1.500l7 7M8.500 1.500l-7 7" stroke="#fff" strokeWidth="1.700" /></svg></WinButton>
          </WinButtons>
        </TitleBar>

        <MenuBar>
          <MenuItem $w={14}><Slot $w={10}><Grip /></Slot></MenuItem>
          {menus.map(([t, w, tw]) => (
            <MenuItem key={t} $w={w}><Label t={t} w={tw} /></MenuItem>
          ))}
          <Grow />
          <HelpBox><Label t="Type a question for help" w={92} color="#8b8b93" /></HelpBox>
          <MenuTail><Caret /><svg width="7" height="7"><path d="M1 1l5 5M6 1L1 6" stroke="#111" strokeWidth="1.500" /></svg></MenuTail>
        </MenuBar>

        <ToolRow>
          <Bar $w={436}>
            <Grip />
            <Slots names={['new', 'open', 'save', 'perm', 'mail']} />
            <Sep $w={6} />
            <Slots names={['print', 'preview']} />
            <Sep $w={3} />
            <Slots names={['spell', 'research']} w={19} />
            <Sep $w={3} />
            <Slots names={['copy', 'paste', 'painter']} />
            <Sep $w={5} />
            <Slots names={['undo']} /><Slot $w={8}><Caret c="#8a8a9e" /></Slot>
            <Sep $w={5} />
            <Slots names={['link', 'table']} />
            <Sep $w={5} />
            <Slot $w={18}><Label t="¶" bold size={12} /></Slot>
            <Combo $w={40}><Label t="110%" w={22} /><ComboArrow><Caret /></ComboArrow></Combo>
            <Sep $w={5} />
            <Slot $w={17}>{Tool.book}</Slot>
            <Label t="&Read" w={20} />
            <Overflow><Label t="»" size={7} bold /><Dash /><Caret /></Overflow>
          </Bar>
          <Bar $w={558}>
            <Grip />
            <Slot $w={20}>{Tool.styles}</Slot>
            <Combo $w={70}><Label t="Normal + Bold," w={56} /><ComboArrow><Caret /></ComboArrow></Combo>
            <Sep $w={2} />
            <Combo $w={86}><Label t="Times New Roman" w={68} /><ComboArrow><Caret /></ComboArrow></Combo>
            <Sep $w={3} />
            <Combo $w={27}><Label t="12" w={10} /><ComboArrow><Caret /></ComboArrow></Combo>
            <Sep $w={6} />
            <LangBox><Label t="AR" w={13} bold color="#fff" /></LangBox>
            <Drop w={10} />
            <Sep $w={4} />
            <ActiveSlot $w={18}><Label t="B" serif bold size={12} /></ActiveSlot>
            <Slot $w={18}><Label t="I" serif bold italic size={12} /></Slot>
            <Slot $w={18}><Label t="&U" serif bold size={11} /></Slot>
            <Sep $w={5} />
            <Slot $w={18}>{Tool.left}</Slot>
            <ActiveSlot $w={18}>{Tool.center}</ActiveSlot>
            <Slots names={['right', 'justify', 'spacing']} />
            <Drop w={8} />
            <Sep $w={5} />
            <ActiveSlot $w={18}>{Tool.ltr}</ActiveSlot>
            <Sep $w={5} />
            <Slots names={['numbers', 'bullets', 'indent']} />
            <Sep $w={4} />
            <Slot $w={18}>{Tool.mark}</Slot><Drop w={8} />
            <Slot $w={19}>{Tool.color}</Slot><Drop w={8} />
            <Overflow><Label t="»" size={7} bold /><Dash /><Caret /></Overflow>
          </Bar>
        </ToolRow>
        <CustomRow>
          <Bar $w={190}>
            <Grip />
            <Slot $w={17} />
            <Slot $w={95} $end><Label t="Check for Plagiarism" w={76} /></Slot>
            <Label t="Restore Toolbar" w={61} />
            <Overflow><Dash /><Caret /></Overflow>
          </Bar>
        </CustomRow>

        <RulerRow>
          <RulerCorner><TabBox><TabMark /></TabBox></RulerCorner>
          <RulerScale>
            <Scale>
              {rulerMarks.map((m, i) => (
                <Mark key={i}>{m === '|' ? <Tick $h={4} /> : m === '.' ? <Tick $h={1} /> : m}</Mark>
              ))}
            </Scale>
            <TabStops />
          </RulerScale>
          <SplitHandle>
            <SplitLine />
            <ScrollButton><Chevron d="up" /></ScrollButton>
          </SplitHandle>
        </RulerRow>
        <IndentMark $x={221} $y={82}>
          <svg width="9" height="18" fill="#fff" stroke="#222"><path d="M1 1.500h7v1L4.500 7 1 2.500zM4.500 7L8 11v1H1v-1zM1 13.500h7v3.500H1z" /></svg>
        </IndentMark>
        <IndentMark $x={776} $y={88}>
          <svg width="9" height="9" fill="#fff" stroke="#222"><path d="M4.500 1L8 4.500v2.500H1V4.500z" /></svg>
        </IndentMark>

        <Work>
          <VRulerCol>
            <VRuler>
              <VMark $h={5}><HTick $w={4} /></VMark>
              <VMark><HTick $w={1} /></VMark>
              <VMark $h={11} />
              <VMark><Turned>24</Turned></VMark>
              {['25', '26', '27'].map(n => (
                <React.Fragment key={n}>
                  <VMark><HTick $w={1} /></VMark>
                  <VMark><HTick $w={4} /></VMark>
                  <VMark><HTick $w={1} /></VMark>
                  <VMark><Turned>{n}</Turned></VMark>
                </React.Fragment>
              ))}
            </VRuler>
          </VRulerCol>
          <Desk>
            <Sheet $h={135} $first>
              <CenterLine>By</CenterLine>
              <CenterLine><DocText t="Mohamed Ali Hassan" w={121} /></CenterLine>
            </Sheet>
            <Sheet $h={330}>
              <Line><DocText t="HTTP: Stateless" w={97} bold /></Line>
              <Line><Misspelt>HyperText</Misspelt><DocText t="  Tran" w={34} /></Line>
              <Line><DocText t="requesting servic" w={94} /></Line>
              <Line><DocText t="users, the most in" w={98} /></Line>
              <Line><DocText t="view ten Web pa" w={97} /></Line>
              <Line><DocText t="server. At any tim" w={101} /></Line>
              <Line><DocText t="time in between t" w={96} /></Line>
              <Line />
              <Line><DocText t="A typical HTTP session:" w={145} bold /></Line>
              <Bullets>
                <Bullet><Dot /><BulletText><Line><DocText t="User types www.yahoo.com into a browser." w={249} /></Line></BulletText></Bullet>
                <Bullet>
                  <Dot />
                  <BulletText>
                    <Line $justify>Browser translates www.yahoo.com into an IP address and tries to open a TCP, connection</Line>
                    <Line><DocText t="with port 80 of that address." w={158} /></Line>
                  </BulletText>
                </Bullet>
                <Bullet>
                  <Dot />
                  <BulletText>
                    <Line $justify>Once a connection is established, the browser sends the following byte stream: "GET /</Line>
                    <Line $justify>HTTP/1.0" (plus two carriage-return line-feeds). The "GET" means that the browser is</Line>
                    <Line $justify>requesting a file. The "/" is the name of the file, in this case simply the root index page. The</Line>
                  </BulletText>
                </Bullet>
              </Bullets>
            </Sheet>
          </Desk>
          <ScrollCol>
            <Thumb $h={50}><GripLines /></Thumb>
            <ScrollButton><Chevron d="down" /></ScrollButton>
            <Pager><svg width="6" height="7"><path d="M0 3l3-3 3 3zM0 7l3-3 3 3z" fill="#222" /></svg></Pager>
            <Pager><svg width="6" height="6" fill="none"><circle cx="3" cy="3" r="2.200" stroke="#222" /></svg></Pager>
            <Pager><svg width="6" height="7"><path d="M0 0l3 3 3-3zM0 4l3 3 3-3z" fill="#222" /></svg></Pager>
          </ScrollCol>
        </Work>

        <ViewBar>
          <ViewButton><svg width="7" height="7"><path d="M0 .5h7M0 2.500h7M0 4.500h7M0 6.500h7" stroke="#333" /></svg></ViewButton>
          <ViewButton><svg width="8" height="8" fill="none"><path d="M1 1.500h5v5H1z" stroke="#333" /><circle cx="5" cy="5" r="2" fill="#333" /></svg></ViewButton>
          <ViewButton $on><svg width="8" height="8" fill="none"><path d="M.5 1.500h7v5h-7zM2 3.500h4M2 5h4" stroke="#54401f" /></svg></ViewButton>
          <ViewButton><svg width="8" height="8" fill="none"><path d="M1 1.500h4l1.500 2L5 6.500H2M3 4h3" stroke="#444" /></svg></ViewButton>
          <ViewButton><svg width="8" height="8" fill="none"><path d="M4 2.500L1 1v5l3 1.500L7 6V1zM4 2.500v5" stroke="#333" /></svg></ViewButton>
          <Slot $w={1} />
          <ScrollButton $h={12}><Chevron d="left" /></ScrollButton>
          <HThumb><GripLines $v /></HThumb>
          <ScrollButton $h={12}><Chevron d="right" /></ScrollButton>
        </ViewBar>

        <StatusBar>
          {status.map(([t, w, tw, on]) => (
            <StatusCell key={t} $w={w}><Label t={t} w={tw} color={on ? '#111' : '#a9a9b3'} /></StatusCell>
          ))}
          <svg width="14" height="10" fill="none"><path d="M7 2L5 1H1v7h4l2 1 2-1h4V1H9z" fill="#fff" stroke="#111" strokeWidth="1.300" /><path d="M7 2v7" stroke="#111" /><path d="M3 2h4v5H3z" fill="#333" /><path d="M4 3h2v1.500H4" stroke="#e6dd60" /></svg>
        </StatusBar>

        <TaskBar>
          <StartButton>
            <Svg s={14}>
              <path d="M1.500 3.500q3-2 6 0l-.8 4.500q-3-2-6 0z" fill="#f0562a" />
              <path d="M8.300 4q3 1.500 6.200 0L13.500 8.500q-3 1.500-6 0z" fill="#8bd23f" />
              <path d="M.6 9q3-2 6 0l-.8 4.500q-3-2-6 0z" fill="#4f92ee" />
              <path d="M7.300 9.500q3 1.500 6 0l-.8 4.500q-3 1.500-6 0z" fill="#fbcf3a" />
            </Svg>
            <StartText><Label t="start" w={30} size={13} bold italic color="#fff" /></StartText>
          </StartButton>
          <Quick><DesktopIcon s={13} /><PsIcon /><Firefox s={13} /><More>»</More></Quick>
          <Tasks>
            {tasks.map(([t, w, icon, on]) => (
              <Task key={t} $on={on}>
                {icon}
                {t === 'Window...' && <Label t="2" bold size={9} color="#e0653d" />}
                <Label t={t} w={w} color={on ? '#f1f1f6' : '#43434e'} />
                {t === 'Window...' && <><Grow /><Caret /></>}
              </Task>
            ))}
          </Tasks>
          <Lang><Label t="AR" w={11} /></Lang>
          <Tray>
            <Hide><Chevron d="left" c="#fff" /></Hide>
            <Slot $w={1} />
            <Svg s={13}><circle cx="8" cy="8" r="6.500" fill="#22357c" /><path d="M3 5q4-4 8-1l-3 4 2 5q-6 0-7-8zM11 8h3v3z" fill="#52b39c" /><path d="M2 8h12M8 2v12" stroke="#99a" strokeWidth=".7" /></Svg>
            <Svg s={13}><path d="M1 3h8v7H1z" fill="#2e3f91" stroke="#4d5580" /><path d="M3 12h6v2H3z" fill="#777c9f" /><path d="M11 4q2 3 0 6M13.500 2.500q3 4.500 0 9" stroke="#8a8da0" /></Svg>
            <Svg s={13}><path d="M1 1l5 2 7 8 1 4-4-1-7-7z" fill="#4b5f7d" stroke="#1f2c42" /><path d="M3 9l3 5M5 4l6 6" stroke="#93b0cf" /></Svg>
            <Slot $w={4} />
            <Label t="3:15 AM" w={31} color="#222" />
          </Tray>
        </TaskBar>

        <Dialog>
          <DialogTitle>
            <Label t="Save As" w={36} size={9.5} bold />
            <Grow />
            <DialogButton><Label t="?" bold size={12} color="#33334d" /></DialogButton>
            <DialogButton $close><svg width="10" height="10"><path d="M1 1l8 8M9 1L1 9" stroke="#fff" strokeWidth="1.600" /></svg></DialogButton>
          </DialogTitle>
          <LookRow>
            <LookLabel><Label t="Save &in:" w={30} /></LookLabel>
            <Field $w={168}><DesktopIcon s={13} /><Label t="Desktop" w={31} /><DropButton><Chevron /></DropButton></Field>
            <Slot $w={25}>{Tool.back}</Slot><Slot $w={1}><Caret /></Slot>
            <Slot $w={25}>{Tool.up}</Slot>
            <Sep $w={1} />
            <Slot $w={18}>{Tool.search}</Slot>
            <Slot $w={18}>{Tool.del}</Slot>
            <Slot $w={18}>{Tool.newfolder}</Slot>
            <Slot $w={18}>{Tool.views}</Slot>
            <Drop w={8} />
            <Slot $w={3} />
            <Label t="Too&ls" w={20} /><Drop w={9} />
          </LookRow>
          <DialogBody>
            <Places>
              <Place $h={51} $pad={2}><FolderTall s={24} /><IconGap $h={2} /><PlaceName><Label t="My Recent" w={40} size={8.5} /></PlaceName><PlaceName><Label t="Documents" w={42} size={8.5} /></PlaceName></Place>
              <Place $h={50} $on $pad={5}><DesktopIcon s={26} /><IconGap $h={1} /><PlaceName><Label t="Desktop" w={31} /></PlaceName></Place>
              <Place $h={51} $pad={7}><DocsIcon s={26} /><IconGap $h={1} /><PlaceName><Label t="My Documents" w={55} /></PlaceName></Place>
              <Place $h={50} $pad={7}><ComputerIcon s={26} /><IconGap $h={1} /><PlaceName><Label t="My Computer" w={50} /></PlaceName></Place>
              <Place $h={52} $pad={1}><NetworkIcon s={27} /><IconGap $h={1} /><PlaceName><Label t="My Network" w={46} size={8.5} /></PlaceName><PlaceName><Label t="Places" w={24} size={8.5} /></PlaceName></Place>
            </Places>
            <Main>
              <FileList>
                {files.map(([name, w, icon]) => (
                  <FileRow key={name}><FileIcon>{icon}</FileIcon><Label t={name} w={w} /></FileRow>
                ))}
              </FileList>
              <Form>
                <FormLabel><Label t="File &name:" w={38} /></FormLabel>
                <FormField $w={235} $h={17}><Label t="http_stateless.txt" w={68} /><DropButton><Chevron /></DropButton></FormField>
                <Push $main><Label t="&Save" w={19} /></Push>
                <FormLabel><Label t="Save as &type:" w={52} /></FormLabel>
                <FormField $w={235} $h={17}><Label t="Plain Text (*.txt)" w={65} /><DropButton><Chevron /></DropButton></FormField>
                <Push><Label t="Cancel" w={26} /></Push>
              </Form>
            </Main>
          </DialogBody>
          <Resize><svg width="8" height="8"><path d="M8 1L1 8M8 4L4 8M8 7L7 8" stroke="#8f8fa5" /></svg></Resize>
        </Dialog>
      </Screen>
    </>
  );
}
